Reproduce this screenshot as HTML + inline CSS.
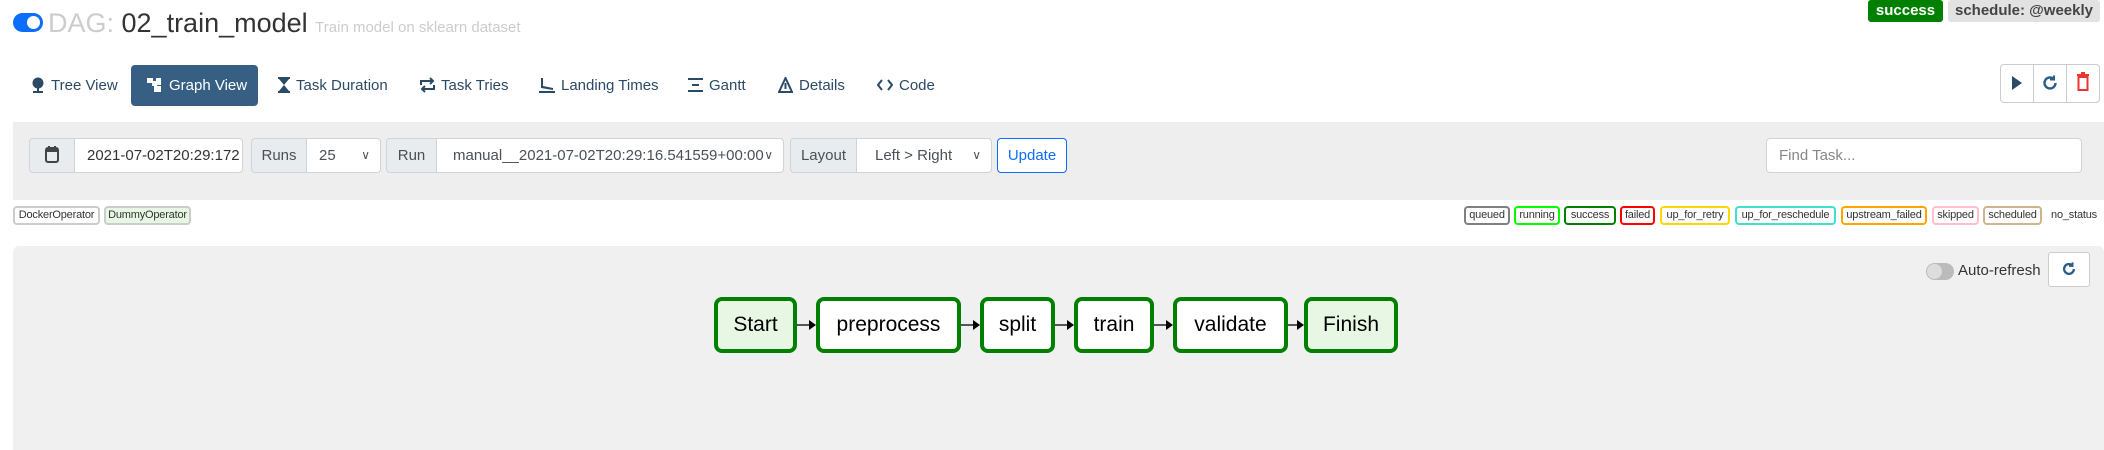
<!DOCTYPE html>
<html><head><meta charset="utf-8"><style>
*{box-sizing:border-box;margin:0;padding:0}
body{width:2104px;height:450px;background:#fff;font-family:"Liberation Sans",Arial,sans-serif;position:relative;overflow:hidden;color:#333}
.a{position:absolute}
.tab{position:absolute;top:65px;height:41px;line-height:41px;font-size:15px;color:#2b4a66;white-space:nowrap}
.tab svg{vertical-align:-3px;margin-right:6px}
.addon{position:absolute;top:138px;height:35px;background:#e9ecef;border:1px solid #ced4da;font-size:15px;line-height:33px;color:#495057;text-align:center}
.inp{position:absolute;top:138px;height:35px;background:#fff;border:1px solid #ced4da;font-size:15px;line-height:33px;color:#495057;padding-left:12px;white-space:nowrap;overflow:hidden;border-radius:0 4px 4px 0}
.car{position:absolute;right:10px;top:0;font-size:12px;color:#555}
.lg{position:absolute;top:206px;height:19px;font-size:11px;line-height:15px;border:2px solid;border-radius:4px;text-align:center;color:#333;background:#fff;white-space:nowrap;overflow:hidden;letter-spacing:-0.2px}
.node{position:absolute;top:297px;height:56px;border:4px solid #008000;border-radius:8px;background:#fff;font-size:21px;line-height:48px;text-align:center;color:#000}
.edge{position:absolute;top:324px;height:2px;background:#555}
.arr{position:absolute;top:320px;width:0;height:0;border-left:7px solid #000;border-top:5px solid transparent;border-bottom:5px solid transparent}
</style></head><body>
<div class="a" style="left:13px;top:13px;width:30px;height:19px;border-radius:10px;background:#0d6efd"></div>
<div class="a" style="left:27px;top:16px;width:13px;height:13px;border-radius:50%;background:#fff"></div>
<div class="a" style="left:48px;top:6px;font-size:27px;line-height:34px;white-space:nowrap;color:#ccc">DAG: <span style="color:#333">02_train_model</span> <span style="font-size:15px;color:#ccc">Train model on sklearn dataset</span></div>
<div class="a" style="left:1868px;top:0;width:75px;height:22px;background:#008000;color:#fff;font-weight:bold;font-size:15px;line-height:22px;text-align:center;border-radius:3px">success</div>
<div class="a" style="left:1948px;top:0;width:152px;height:22px;background:#e2e2e2;color:#444;font-weight:bold;font-size:15px;line-height:22px;text-align:center;border-radius:3px">schedule: @weekly</div>
<div class="tab" style="left:31px"><svg width="14" height="16" viewBox="0 0 14 16"><circle cx="7" cy="6" r="5.5" fill="#2b4a66"/><rect x="6" y="10" width="2" height="5" fill="#2b4a66"/><rect x="2" y="14" width="10" height="2" fill="#2b4a66"/></svg>Tree View</div>
<div class="a" style="left:131px;top:65px;width:127px;height:41px;background:#365f83;border-radius:4px"></div>
<div class="tab" style="left:147px;color:#fff"><svg width="16" height="16" viewBox="0 0 16 16" fill="#fff"><rect x="0" y="1" width="6" height="5"/><rect x="5" y="4" width="5" height="5"/><rect x="9" y="1" width="5" height="7"/><rect x="7" y="9" width="7" height="6"/></svg>Graph View</div>
<div class="tab" style="left:278px"><svg width="12" height="16" viewBox="0 0 12 16" fill="#2b4a66"><rect x="0" y="0" width="12" height="2"/><rect x="0" y="14" width="12" height="2"/><path d="M1 2h10L6 8l5 6H1l5-6z"/></svg>Task Duration</div>
<div class="tab" style="left:420px"><svg width="15" height="16" viewBox="0 0 15 16" fill="none" stroke="#2b4a66" stroke-width="2"><path d="M1 8V4h12M10 1l3 3-3 3M14 8v4H2M5 9l-3 3 3 3"/></svg>Task Tries</div>
<div class="tab" style="left:539px"><svg width="16" height="16" viewBox="0 0 16 16" fill="#2b4a66"><path d="M2 1h2v8l10 2v2L2 11z"/><rect x="0" y="14" width="16" height="2"/></svg>Landing Times</div>
<div class="tab" style="left:688px"><svg width="15" height="16" viewBox="0 0 15 16" fill="#2b4a66"><rect x="0" y="1" width="15" height="2"/><rect x="4" y="7" width="7" height="2"/><rect x="0" y="13" width="15" height="2"/></svg>Gantt</div>
<div class="tab" style="left:778px"><svg width="15" height="16" viewBox="0 0 15 16" fill="none" stroke="#2b4a66" stroke-width="2"><path d="M7.5 1L1 15h13z M7.5 6v6"/></svg>Details</div>
<div class="tab" style="left:877px"><svg width="16" height="16" viewBox="0 0 16 16" fill="none" stroke="#2b4a66" stroke-width="2"><path d="M5 3L1 8l4 5M11 3l4 5-4 5"/></svg>Code</div>
<div class="a" style="left:2000px;top:64px;width:100px;height:39px;border:1px solid #ccc;border-radius:4px;background:#fff"></div>
<div class="a" style="left:2033px;top:65px;width:1px;height:37px;background:#ccc"></div>
<div class="a" style="left:2066px;top:65px;width:1px;height:37px;background:#ccc"></div>
<div class="a" style="left:2012px;top:76px;width:0;height:0;border-left:10px solid #2b4a66;border-top:7px solid transparent;border-bottom:7px solid transparent"></div>
<svg class="a" style="left:2041px;top:74px" width="18" height="18" viewBox="0 0 18 18" fill="none" stroke="#2b5d8a" stroke-width="2.4"><path d="M14.5 9a5.5 5.5 0 1 1-2-4.3"/><path d="M13 1.5v4h-4" stroke-width="2"/></svg>
<svg class="a" style="left:2076px;top:72px" width="14" height="20" viewBox="0 0 14 20" fill="none" stroke="#e33" stroke-width="2"><path d="M1 3h12M5 1h4"/><rect x="2.5" y="5" width="9" height="13"/></svg>
<div class="a" style="left:13px;top:122px;width:2091px;height:78px;background:#eeeeee"></div>
<div class="addon" style="left:29px;width:46px;border-radius:4px 0 0 4px"><svg width="14" height="17" viewBox="0 0 14 17" style="vertical-align:-3px"><rect x="1" y="2" width="12" height="14" rx="2" fill="none" stroke="#444" stroke-width="2"/><rect x="1" y="2" width="12" height="4" fill="#444"/><rect x="3" y="0" width="2" height="3" fill="#444"/><rect x="9" y="0" width="2" height="3" fill="#444"/></svg></div>
<div class="inp" style="left:74px;width:169px;color:#333">2021-07-02T20:29:172</div>
<div class="addon" style="left:251px;width:56px;border-radius:4px 0 0 4px">Runs</div>
<div class="inp" style="left:306px;width:75px">25<span class="car">&#8744;</span></div>
<div class="addon" style="left:386px;width:51px;border-radius:4px 0 0 4px">Run</div>
<div class="inp" style="left:436px;width:348px;padding-left:16px">manual__2021-07-02T20:29:16.541559+00:00<span class="car">&#8744;</span></div>
<div class="addon" style="left:790px;width:67px;border-radius:4px 0 0 4px">Layout</div>
<div class="inp" style="left:856px;width:136px;padding-left:18px">Left &gt; Right<span class="car">&#8744;</span></div>
<div class="a" style="left:997px;top:138px;width:70px;height:35px;border:1px solid #0d6efd;border-radius:4px;background:#fff;color:#0d6efd;font-size:15px;line-height:33px;text-align:center">Update</div>
<div class="a" style="left:1766px;top:138px;width:316px;height:35px;border:1px solid #ced4da;border-radius:4px;background:#fff;color:#888;font-size:15px;line-height:33px;padding-left:12px">Find Task...</div>
<div class="lg" style="left:13px;width:87px;border-color:#ccc">DockerOperator</div>
<div class="lg" style="left:104px;width:87px;border-color:#ccc;background:#e8f7e4">DummyOperator</div>
<div class="lg" style="left:1464px;width:46px;border-color:#808080">queued</div>
<div class="lg" style="left:1514px;width:46px;border-color:#00ff00">running</div>
<div class="lg" style="left:1564px;width:52px;border-color:#008000">success</div>
<div class="lg" style="left:1620px;width:35px;border-color:#ff0000">failed</div>
<div class="lg" style="left:1660px;width:70px;border-color:#ffd700">up_for_retry</div>
<div class="lg" style="left:1735px;width:101px;border-color:#40e0d0">up_for_reschedule</div>
<div class="lg" style="left:1841px;width:86px;border-color:#ffa500">upstream_failed</div>
<div class="lg" style="left:1932px;width:47px;border-color:#ffc0cb">skipped</div>
<div class="lg" style="left:1983px;width:59px;border-color:#d2b48c">scheduled</div>
<div class="lg" style="left:2046px;width:56px;border-color:#fff">no_status</div>
<div class="a" style="left:13px;top:246px;width:2091px;height:204px;background:#f0f0f0;border-radius:6px 6px 0 0"></div>
<div class="a" style="left:1926px;top:263px;width:28px;height:17px;border-radius:9px;background:#bbb"></div>
<div class="a" style="left:1927px;top:264px;width:15px;height:15px;border-radius:50%;background:#ddd"></div>
<div class="a" style="left:1958px;top:260px;font-size:15px;line-height:22px;color:#333">Auto-refresh</div>
<div class="a" style="left:2048px;top:252px;width:42px;height:35px;border:1px solid #ccc;border-radius:3px;background:#fff"></div>
<svg class="a" style="left:2061px;top:261px" width="16" height="16" viewBox="0 0 18 18" fill="none" stroke="#2b5d8a" stroke-width="2.6"><path d="M14.5 9a5.5 5.5 0 1 1-2-4.3"/><path d="M13 1.5v4h-4" stroke-width="2.2"/></svg>
<div class="edge" style="left:797px;width:14px"></div><div class="arr" style="left:809px"></div>
<div class="edge" style="left:961px;width:14px"></div><div class="arr" style="left:973px"></div>
<div class="edge" style="left:1055px;width:14px"></div><div class="arr" style="left:1067px"></div>
<div class="edge" style="left:1154px;width:14px"></div><div class="arr" style="left:1166px"></div>
<div class="edge" style="left:1288px;width:10px"></div><div class="arr" style="left:1297px"></div>
<div class="node" style="left:714px;width:83px;background:#e8f7e4">Start</div>
<div class="node" style="left:816px;width:145px">preprocess</div>
<div class="node" style="left:980px;width:75px">split</div>
<div class="node" style="left:1074px;width:80px">train</div>
<div class="node" style="left:1173px;width:115px">validate</div>
<div class="node" style="left:1304px;width:94px;background:#e8f7e4">Finish</div>
</body></html>
